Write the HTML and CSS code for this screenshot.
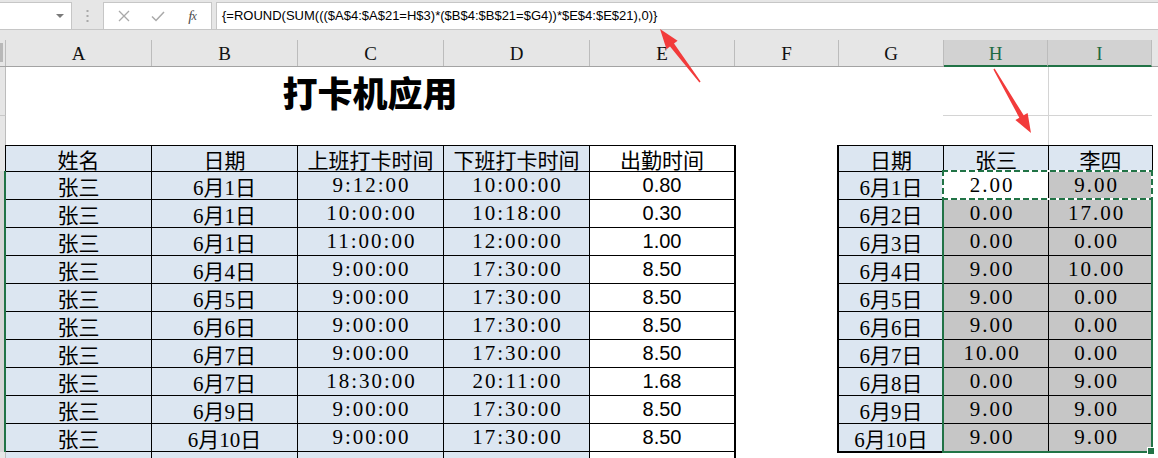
FILE: index.html
```html
<!DOCTYPE html>
<html lang="zh">
<head>
<meta charset="utf-8">
<title>打卡机应用</title>
<link rel="stylesheet" href="styles.css">
</head>
<body>
<div class="toolbar">
  <div class="namebox"><span class="caret"></span></div>
  <div class="grip"><svg width="3" height="12" viewBox="0 0 3 12"><rect x="0.5" y="0" width="2" height="2" fill="#a8a8a8"/><rect x="0.5" y="5" width="2" height="2" fill="#a8a8a8"/><rect x="0.5" y="10" width="2" height="2" fill="#a8a8a8"/></svg></div>
  <div class="fbtns">
    <span class="fb"><svg width="12" height="12" viewBox="0 0 12 12"><path d="M1 1L11 11M11 1L1 11" stroke="#a9a9a9" stroke-width="1.3" fill="none"/></svg></span>
    <span class="fb"><svg width="14" height="11" viewBox="0 0 14 11"><path d="M1 5.5L5 9.5L13 1" stroke="#a9a9a9" stroke-width="1.5" fill="none"/></svg></span>
    <span class="fb fx">f<span class="fxx">x</span></span>
  </div>
  <div class="formula">{=ROUND(SUM((($A$4:$A$21=H$3)*($B$4:$B$21=$G4))*$E$4:$E$21),0)}</div>
</div>
<div class="band"></div>
<div class="colheads">
  <div class="corner"><span class="selall"></span></div>
  <div class="ch wa">A</div>
  <div class="ch wa">B</div>
  <div class="ch wa">C</div>
  <div class="ch wa">D</div>
  <div class="ch we">E</div>
  <div class="ch wf">F</div>
  <div class="ch wg">G</div>
  <div class="ch wh sel">H</div>
  <div class="ch wh sel">I</div>
  <div class="ch rest"></div>
</div>
<div class="sheet">
  <div class="rowheads">
    <div class="rh r1"></div>
    <div class="rh r2"></div>
    <div class="rh r3"></div>
    <div class="rh rsel"></div>
    <div class="rh rrest"></div>
  </div>
  <div class="cells">
    <div class="toprows">
      <div class="title">打卡机应用</div>
      <div class="hi-grid">
        <div class="gr gr1"><div class="gc gch"></div><div class="gc gci"></div></div>
        <div class="gr gr2"><div class="gc gch"></div><div class="gc gci"></div></div>
      </div>
    </div>
    <div class="tables">
      <div class="ltable">
        <div class="c">姓名</div><div class="c">日期</div><div class="c">上班打卡时间</div><div class="c">下班打卡时间</div><div class="c w">出勤时间</div>
        <div class="c">张三</div><div class="c">6月1日</div><div class="c t">9:12:00</div><div class="c t">10:00:00</div><div class="c w num">0.80</div>
        <div class="c">张三</div><div class="c">6月1日</div><div class="c t">10:00:00</div><div class="c t">10:18:00</div><div class="c w num">0.30</div>
        <div class="c">张三</div><div class="c">6月1日</div><div class="c t">11:00:00</div><div class="c t">12:00:00</div><div class="c w num">1.00</div>
        <div class="c">张三</div><div class="c">6月4日</div><div class="c t">9:00:00</div><div class="c t">17:30:00</div><div class="c w num">8.50</div>
        <div class="c">张三</div><div class="c">6月5日</div><div class="c t">9:00:00</div><div class="c t">17:30:00</div><div class="c w num">8.50</div>
        <div class="c">张三</div><div class="c">6月6日</div><div class="c t">9:00:00</div><div class="c t">17:30:00</div><div class="c w num">8.50</div>
        <div class="c">张三</div><div class="c">6月7日</div><div class="c t">9:00:00</div><div class="c t">17:30:00</div><div class="c w num">8.50</div>
        <div class="c">张三</div><div class="c">6月7日</div><div class="c t">18:30:00</div><div class="c t">20:11:00</div><div class="c w num">1.68</div>
        <div class="c">张三</div><div class="c">6月9日</div><div class="c t">9:00:00</div><div class="c t">17:30:00</div><div class="c w num">8.50</div>
        <div class="c">张三</div><div class="c">6月10日</div><div class="c t">9:00:00</div><div class="c t">17:30:00</div><div class="c w num">8.50</div>
        <div class="c"></div><div class="c"></div><div class="c"></div><div class="c"></div><div class="c w"></div>
      </div>
      <div class="rtable">
        <div class="c">日期</div><div class="c">张三</div><div class="c">李四</div>
        <div class="c">6月1日</div><div class="c t v act">2.00</div><div class="c t v g">9.00</div>
        <div class="c">6月2日</div><div class="c t v g">0.00</div><div class="c t v g">17.00</div>
        <div class="c">6月3日</div><div class="c t v g">0.00</div><div class="c t v g">0.00</div>
        <div class="c">6月4日</div><div class="c t v g">9.00</div><div class="c t v g">10.00</div>
        <div class="c">6月5日</div><div class="c t v g">9.00</div><div class="c t v g">0.00</div>
        <div class="c">6月6日</div><div class="c t v g">9.00</div><div class="c t v g">0.00</div>
        <div class="c">6月7日</div><div class="c t v g">10.00</div><div class="c t v g">0.00</div>
        <div class="c">6月8日</div><div class="c t v g">0.00</div><div class="c t v g">9.00</div>
        <div class="c">6月9日</div><div class="c t v g">9.00</div><div class="c t v g">9.00</div>
        <div class="c">6月10日</div><div class="c t v g">9.00</div><div class="c t v g">9.00</div>
        <div class="selbox"></div>
        <div class="marquee"></div>
        <div class="handle"></div>
      </div>
    </div>
  </div>
</div>
<svg class="arrows" width="1158" height="458" viewBox="0 0 1158 458">
  <polygon fill="#f23b3b" points="660,29 677.6,40.7 674.0,43.5 700.6,81.6 699.4,82.4 670.0,46.5 666.5,49.2"/>
  <polygon fill="#f23b3b" points="1031,133 1027.6,113.0 1023.7,115.3 994.6,68.6 993.4,69.4 1019.3,117.8 1015.4,120.1"/>
</svg>
</body>
</html>
```
FILE: styles.css
```css
body {
  margin: 0;
  width: 1158px;
  height: 458px;
  overflow: hidden;
  background: #fff;
  position: relative;
  font-family: "Liberation Serif", "Noto Sans CJK SC", serif;
  color: #000;
}

/* formula bar */
.toolbar {
  height: 30px;
  box-sizing: border-box;
  padding-top: 2px;
  background: #e6e6e6;
  border-bottom: 1px solid #c6c6c6;
  display: flex;
}
.namebox {
  width: 73px;
  margin-left: -1px;
  box-sizing: border-box;
  background: #fff;
  border: 1px solid #c6c6c6;
  border-bottom: none;
  display: flex;
  align-items: center;
  justify-content: flex-end;
  padding-right: 7px;
}
.caret {
  width: 0;
  height: 0;
  border-left: 4px solid transparent;
  border-right: 4px solid transparent;
  border-top: 4px solid #7a7a7a;
}
.grip {
  width: 31px;
  display: flex;
  align-items: center;
  justify-content: center;
}
.fbtns {
  width: 109px;
  box-sizing: border-box;
  background: #fff;
  border: 1px solid #c6c6c6;
  border-bottom: none;
  display: flex;
  align-items: center;
}
.fb {
  width: 34px;
  display: flex;
  justify-content: center;
  align-items: center;
}
.fb:first-child { margin-left: 3px; }
.fx {
  font-family: "Liberation Serif", serif;
  font-style: italic;
  font-size: 15px;
  color: #505050;
  letter-spacing: -1px;
}
.fxx { font-size: 12px; }
.formula {
  flex: 1;
  margin-left: 4px;
  background: #fff;
  border: 1px solid #c6c6c6;
  border-bottom: none;
  border-right: none;
  padding-left: 5px;
  font-family: "Liberation Sans", Arial, sans-serif;
  font-size: 13px;
  line-height: 26px;
  white-space: nowrap;
}
.band {
  height: 10px;
  background: #e6e6e6;
}

/* column headings */
.colheads {
  display: flex;
  height: 27px;
  box-sizing: border-box;
  background: #e6e6e6;
  border-bottom: 1px solid #a3a3a3;
}
.corner {
  width: 6px;
  flex: none;
  box-sizing: border-box;
  border-right: 1px solid #bcbcbc;
}
.selall {
  display: block;
  width: 3px;
  height: 19px;
  margin-top: 3px;
  background: #b8b8b8;
}
.ch {
  flex: none;
  box-sizing: border-box;
  border-right: 1px solid #bcbcbc;
  display: flex;
  align-items: center;
  justify-content: center;
  font-size: 19px;
  color: #111;
  padding-top: 2px;
}
.wa { width: 146px; }
.we { width: 145px; }
.wf { width: 104px; }
.wg { width: 105px; }
.wh { width: 104px; }
.ch.sel {
  background: #d2d2d2;
  color: #1e6b43;
  border-bottom: 2px solid #217346;
  margin-bottom: -1px;
}
.ch.rest { flex: 1; border-right: none; }

/* sheet body */
.sheet {
  display: flex;
}
.rowheads {
  width: 6px;
  flex: none;
  display: flex;
  flex-direction: column;
}
.rh {
  box-sizing: border-box;
  background: #e6e6e6;
  border-right: 1px solid #bcbcbc;
}
.r1 { height: 49px; border-bottom: 1px solid #c8c8c8; }
.r2 { height: 29px; }
.r3 { height: 26px; border-right-color: #000; }
.rsel { height: 281px; background: #d6d6d6; border-right: 2px solid #217346; }
.rrest { height: 40px; }

.cells {
  flex: 1;
}
.toprows {
  display: flex;
  height: 78px;
}
.title {
  width: 728px;
  height: 48px;
  display: flex;
  align-items: center;
  justify-content: center;
  font-family: "Noto Sans CJK SC", sans-serif;
  font-weight: 900;
  font-size: 35px;
}
.hi-grid {
  margin-left: 209px;
  width: 209px;
}
.gr { display: flex; }
.gr1 { height: 49px; border-bottom: 1px solid #d4d4d4; box-sizing: border-box; }
.gr2 { height: 29px; }
.gc { box-sizing: border-box; }
.gch { width: 106px; border-right: 1px solid #d4d4d4; }
.gci { flex: 1; }

/* tables */
.tables {
  display: flex;
  align-items: flex-start;
}
.ltable, .rtable {
  display: grid;
  grid-template-rows: 25px;
  grid-auto-rows: 27px;
  gap: 1px;
  background: #000;
}
.ltable {
  grid-template-columns: 145px 145px 145px 145px 144px;
  padding: 1px 2px 0 0;
}
.rtable {
  grid-template-columns: 104px 104px 103px;
  padding: 1px 1px 2px 2px;
  margin-left: 101px;
  position: relative;
}
.c {
  background: #dce6f1;
  display: flex;
  align-items: center;
  justify-content: center;
  font-size: 21px;
  white-space: nowrap;
}
.c.w { background: #fff; }
.c.t { letter-spacing: 2px; padding-left: 2px; }
.c.v { padding-right: 10px; }
.c.g { background: #c6c6c6; }
.c.act { background: #fff; }
.num {
  font-family: "Liberation Sans", Arial, sans-serif;
  font-size: 20px;
}

/* selection overlays */
.selbox {
  position: absolute;
  left: 105px;
  top: 25px;
  width: 211px;
  height: 283px;
  box-sizing: border-box;
  border: 2px solid #217346;
}
.marquee {
  position: absolute;
  left: 105px;
  top: 25px;
  width: 211px;
  height: 30px;
  background:
    repeating-linear-gradient(90deg, #217346 0 6px, #fff 6px 9px) left top / 100% 2px no-repeat,
    repeating-linear-gradient(90deg, #217346 0 6px, #fff 6px 9px) left bottom / 100% 2px no-repeat,
    repeating-linear-gradient(180deg, #217346 0 6px, #fff 6px 9px) left top / 2px 100% no-repeat,
    repeating-linear-gradient(180deg, #217346 0 6px, #fff 6px 9px) right top / 2px 100% no-repeat;
}
.handle {
  position: absolute;
  left: 310px;
  top: 302px;
  width: 6px;
  height: 6px;
  background: #217346;
  border-left: 1px solid #fff;
  border-top: 1px solid #fff;
}

.arrows {
  position: absolute;
  left: 0;
  top: 0;
  pointer-events: none;
}
```
